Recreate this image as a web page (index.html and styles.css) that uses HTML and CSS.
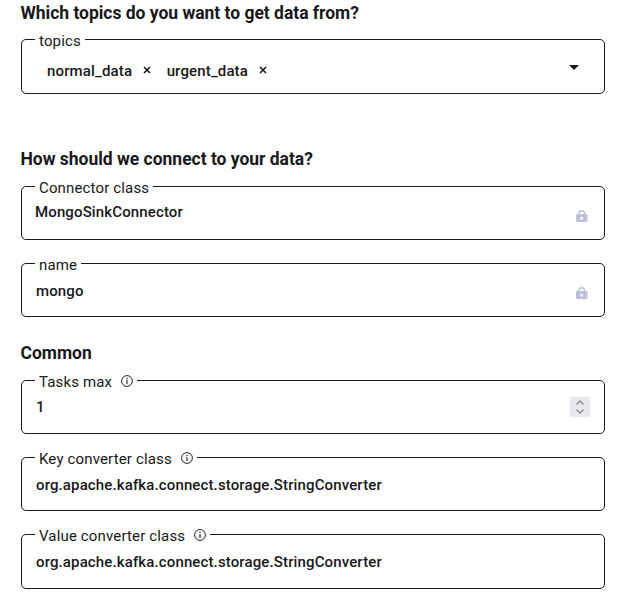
FILE: index.html
```html
<!DOCTYPE html>
<html lang="en">
<head>
<meta charset="utf-8">
<title>Connector configuration</title>
<link rel="stylesheet" href="styles.css">
</head>
<body>
<svg width="0" height="0" class="sprite">
  <symbol id="info" viewBox="0 0 12 12"><circle cx="6" cy="6" r="5.4" fill="none" stroke="currentColor" stroke-width=".95"/><path d="M6 5v4" stroke="currentColor" stroke-width="1.1"/><circle cx="6" cy="3.4" r=".7" fill="currentColor"/></symbol>
  <symbol id="lock" viewBox="0 0 12 12"><path d="M3 5V3.3a2.75 2.6 0 0 1 5.5 0V5" fill="none" stroke="currentColor" stroke-width="1.4"/><rect x="0" y="4" width="11.5" height="8" rx="1.2" fill="currentColor"/><ellipse cx="5.6" cy="8.2" rx="1.3" ry="1.6" fill="#fff"/></symbol>
  <symbol id="cross" viewBox="0 0 8 8"><path d="M1 1l6 6M7 1L1 7" stroke="currentColor" stroke-width="1.6"/></symbol>
</svg>
<main class="form">
  <section class="group">
    <h2 class="title">Which topics do you want to get data from?</h2>
    <div class="field field-tall">
      <div class="label">topics</div>
      <div class="chips">
        <span class="chip">normal_data<svg class="cross"><use href="#cross"/></svg></span>
        <span class="chip">urgent_data<svg class="cross"><use href="#cross"/></svg></span>
      </div>
      <svg class="end caret" viewBox="0 0 10 5"><path d="M0 0h10L5 5z" fill="currentColor"/></svg>
    </div>
  </section>
  <section class="group group-connect">
    <h2 class="title">How should we connect to your data?</h2>
    <div class="field">
      <div class="label">Connector class</div>
      <div class="value value-select">MongoSinkConnector</div>
      <svg class="end lock"><use href="#lock"/></svg>
    </div>
    <div class="field">
      <div class="label">name</div>
      <div class="value">mongo</div>
      <svg class="end lock"><use href="#lock"/></svg>
    </div>
  </section>
  <section class="group group-common">
    <h2 class="title">Common</h2>
    <div class="field">
      <div class="label">Tasks max<svg class="info"><use href="#info"/></svg></div>
      <div class="value value-number">1</div>
      <svg class="end stepper" viewBox="0 0 20 20"><path d="M6.5 7.5L10 4l3.5 3.5M6.5 12.5L10 16l3.5-3.5" fill="none" stroke="#8d8c99" stroke-width="1.5"/></svg>
    </div>
    <div class="field">
      <div class="label">Key converter class<svg class="info"><use href="#info"/></svg></div>
      <div class="value">org.apache.kafka.connect.storage.StringConverter</div>
    </div>
    <div class="field field-tall">
      <div class="label">Value converter class<svg class="info"><use href="#info"/></svg></div>
      <div class="value">org.apache.kafka.connect.storage.StringConverter</div>
    </div>
  </section>
</main>
</body>
</html>
```
FILE: styles.css
```css
* { box-sizing: border-box; }
body {
  margin: 0;
  background: #fff;
  color: #18181b;
  font-family: Roboto, "Liberation Sans", sans-serif;
  font-size: 15px;
  letter-spacing: .15px;
}
.sprite { display: block; }
.form { padding: 3px 27px 0 21px; }
.group { display: flex; flex-direction: column; gap: 23px; }
.group-connect { margin-top: 55px; }
.group-common { margin-top: 26px; }
.title {
  height: 20px;
  margin: 0 0 -7px -.5px;
  font-size: 17.5px;
  line-height: 20px;
  font-weight: 700;
  letter-spacing: -.02px;
}
.group-connect .title,
.group-common .title { margin-bottom: -6px; }
.field {
  display: grid;
  grid-template-columns: 1fr auto;
  grid-template-rows: 9px 33px;
  height: 54px;
  padding: 0 14px 0 13px;
  border: 1px solid #18181b;
  border-radius: 5px;
}
.field-tall { height: 55px; }
.label {
  grid-column: 1 / 3;
  justify-self: start;
  display: flex;
  height: 18px;
  margin-top: -9px;
  padding: 0 4px;
  background: #fff;
  line-height: 20px;
}
.info { width: 12px; height: 12px; margin: 3px 0 0 9px; }
.value {
  padding: 8px 0 0 1px;
  font-weight: 500;
  line-height: 20px;
  letter-spacing: .13px;
}
.value-select { padding: 6px 0 0; }
.value-number { padding-top: 7px; }
.chips {
  display: flex;
  gap: 16px;
  padding: 12px 0 0 12px;
  font-weight: 500;
  line-height: 20px;
}
.chip { display: flex; }
.cross { width: 8px; height: 8px; margin: 5px 0 0 10.5px; }
.end { align-self: start; }
.caret { width: 10px; height: 5px; margin: 16px 11px 0 0; }
.lock { width: 12px; height: 12px; margin: 14px 2px 0 0; color: #bdbfd8; }
.stepper { width: 20px; height: 20px; margin-top: 7px; background: #e9e9ed; }
```
